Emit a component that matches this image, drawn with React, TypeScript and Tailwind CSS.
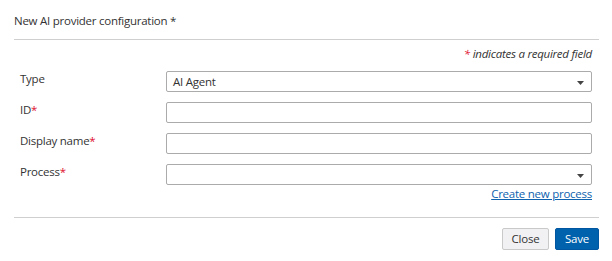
import React from 'react'

const font = { fontFamily: '"Open Sans", "Noto Sans", sans-serif' }

function Req() {
  return <span className="text-[#e0102f]">*</span>
}

function Arrow() {
  return (
    <svg width="7" height="4" viewBox="0 0 7 4" className="absolute right-[8px] top-[10px]">
      <path d="M0 0 H7 L3.5 4 Z" fill="#444" />
    </svg>
  )
}

function Row({ label, req, children }: { label: string; req?: boolean; children: React.ReactNode }) {
  return (
    <div className="flex items-start">
      <label className="w-[146px] leading-[16px]">
        {label}
        {req && <Req />}
      </label>
      <div className="relative flex-1">{children}</div>
    </div>
  )
}

export default function App() {
  return (
    <div className="w-[612px] h-[261px] bg-white pl-[14px] pr-[13px] text-[11.5px] tracking-[-0.25px] text-[#333]" style={font}>
      <div className="flex h-[40px] items-center border-b border-[#cfcfcf] pt-[2px]">
        <h1 className="leading-[16px]">New AI provider configuration *</h1>
      </div>
      <div className="pl-[6px] pr-[7px]">
        <p className="mt-[6px] text-right italic leading-[16px]">
          <Req /> indicates a required field
        </p>
        <div className="mt-[9px] flex flex-col gap-[10px]">
          <Row label="Type">
            <div className="flex h-[21px] items-center rounded-[2px] border border-[#ababab] px-[6px] leading-[16px]">AI Agent</div>
            <Arrow />
          </Row>
          <Row label="ID" req>
            <div className="h-[21px] rounded-[2px] border border-[#ababab]" />
          </Row>
          <Row label="Display name" req>
            <div className="h-[21px] rounded-[2px] border border-[#ababab]" />
          </Row>
          <Row label="Process" req>
            <div className="h-[21px] rounded-[2px] border border-[#ababab]" />
            <Arrow />
          </Row>
        </div>
        <div className="mt-[1px] text-right leading-[16px]">
          <a className="text-[#0e62ae] underline">Create new process</a>
        </div>
      </div>
      <div className="mt-[15px] border-t border-[#cfcfcf]" />
      <div className="mt-[10px] flex justify-end gap-[6px]">
        <button className="h-[22px] w-[47px] rounded-[2px] border border-[#c9c9c9] bg-[#f1f1f3] leading-[16px] text-[#333]">Close</button>
        <button className="h-[22px] w-[44px] rounded-[2px] border border-[#0056a0] bg-[#0061ad] leading-[16px] text-white">Save</button>
      </div>
    </div>
  )
}
